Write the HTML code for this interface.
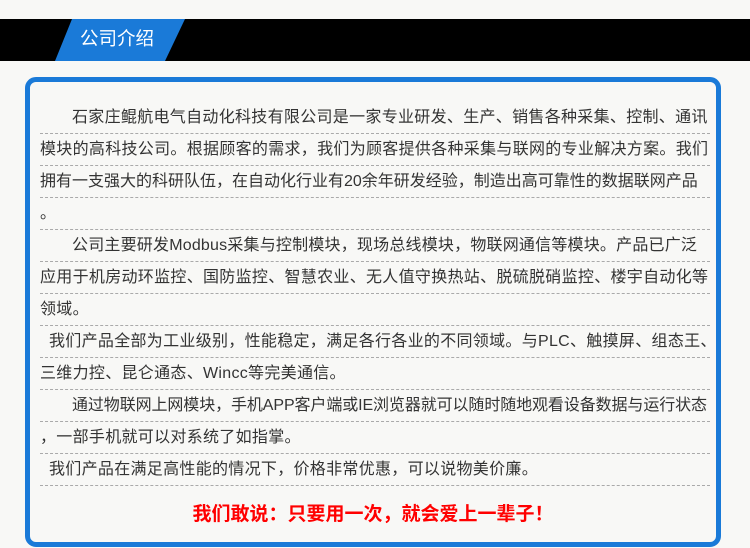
<!DOCTYPE html>
<html><head><meta charset="utf-8"><style>
*{margin:0;padding:0;box-sizing:border-box}
body{width:750px;height:548px;background:#f8f8f6;position:relative;overflow:hidden;font-family:"Liberation Sans","Noto Sans CJK SC",sans-serif}
.bar{position:absolute;left:0;top:19px;width:750px;height:42px;background:#000}
.tab{position:absolute;left:55px;top:19px;width:130px;height:42px;background:#1a7ad8;clip-path:polygon(17px 0,130px 0,110px 42px,0 42px)}
.tab span{position:absolute;left:25px;top:9px;color:#fff;font-size:18.5px;line-height:22px}
.box{position:absolute;left:25px;top:77px;width:696px;height:470px;border:5px solid #1a7ad8;border-radius:11px;background:#f8f8f6}
.rows{position:absolute;left:10px;top:20px;width:670px}
.r{height:32px;line-height:31px;border-bottom:1px dashed #aaa;font-size:16px;color:#333;white-space:nowrap;letter-spacing:0.3px}
.red{position:absolute;left:0;width:686px;top:417px;text-align:center;color:#f00;font-weight:bold;font-size:19px}
</style></head><body>
<div class="bar"></div>
<div class="tab"><span>公司介绍</span></div>
<div class="box">
<div class="rows">
<div class="r" style="padding-left:32px">石家庄鲲航电气自动化科技有限公司是一家专业研发、生产、销售各种采集、控制、通讯</div>
<div class="r">模块的高科技公司。根据顾客的需求，我们为顾客提供各种采集与联网的专业解决方案。我们</div>
<div class="r" style="letter-spacing:0">拥有一支强大的科研队伍，在自动化行业有20余年研发经验，制造出高可靠性的数据联网产品</div>
<div class="r">。</div>
<div class="r" style="padding-left:32px;letter-spacing:0.2px">公司主要研发Modbus采集与控制模块，现场总线模块，物联网通信等模块。产品已广泛</div>
<div class="r">应用于机房动环监控、国防监控、智慧农业、无人值守换热站、脱硫脱硝监控、楼宇自动化等</div>
<div class="r">领域。</div>
<div class="r" style="padding-left:9px">我们产品全部为工业级别，性能稳定，满足各行各业的不同领域。与PLC、触摸屏、组态王、</div>
<div class="r">三维力控、昆仑通态、Wincc等完美通信。</div>
<div class="r" style="padding-left:32px;letter-spacing:-0.1px">通过物联网上网模块，手机APP客户端或IE浏览器就可以随时随地观看设备数据与运行状态</div>
<div class="r">，一部手机就可以对系统了如指掌。</div>
<div class="r" style="padding-left:9px">我们产品在满足高性能的情况下，价格非常优惠，可以说物美价廉。</div>
</div>
<div class="red">我们敢说：只要用一次，就会爱上一辈子！</div>
</div>
</body></html>
